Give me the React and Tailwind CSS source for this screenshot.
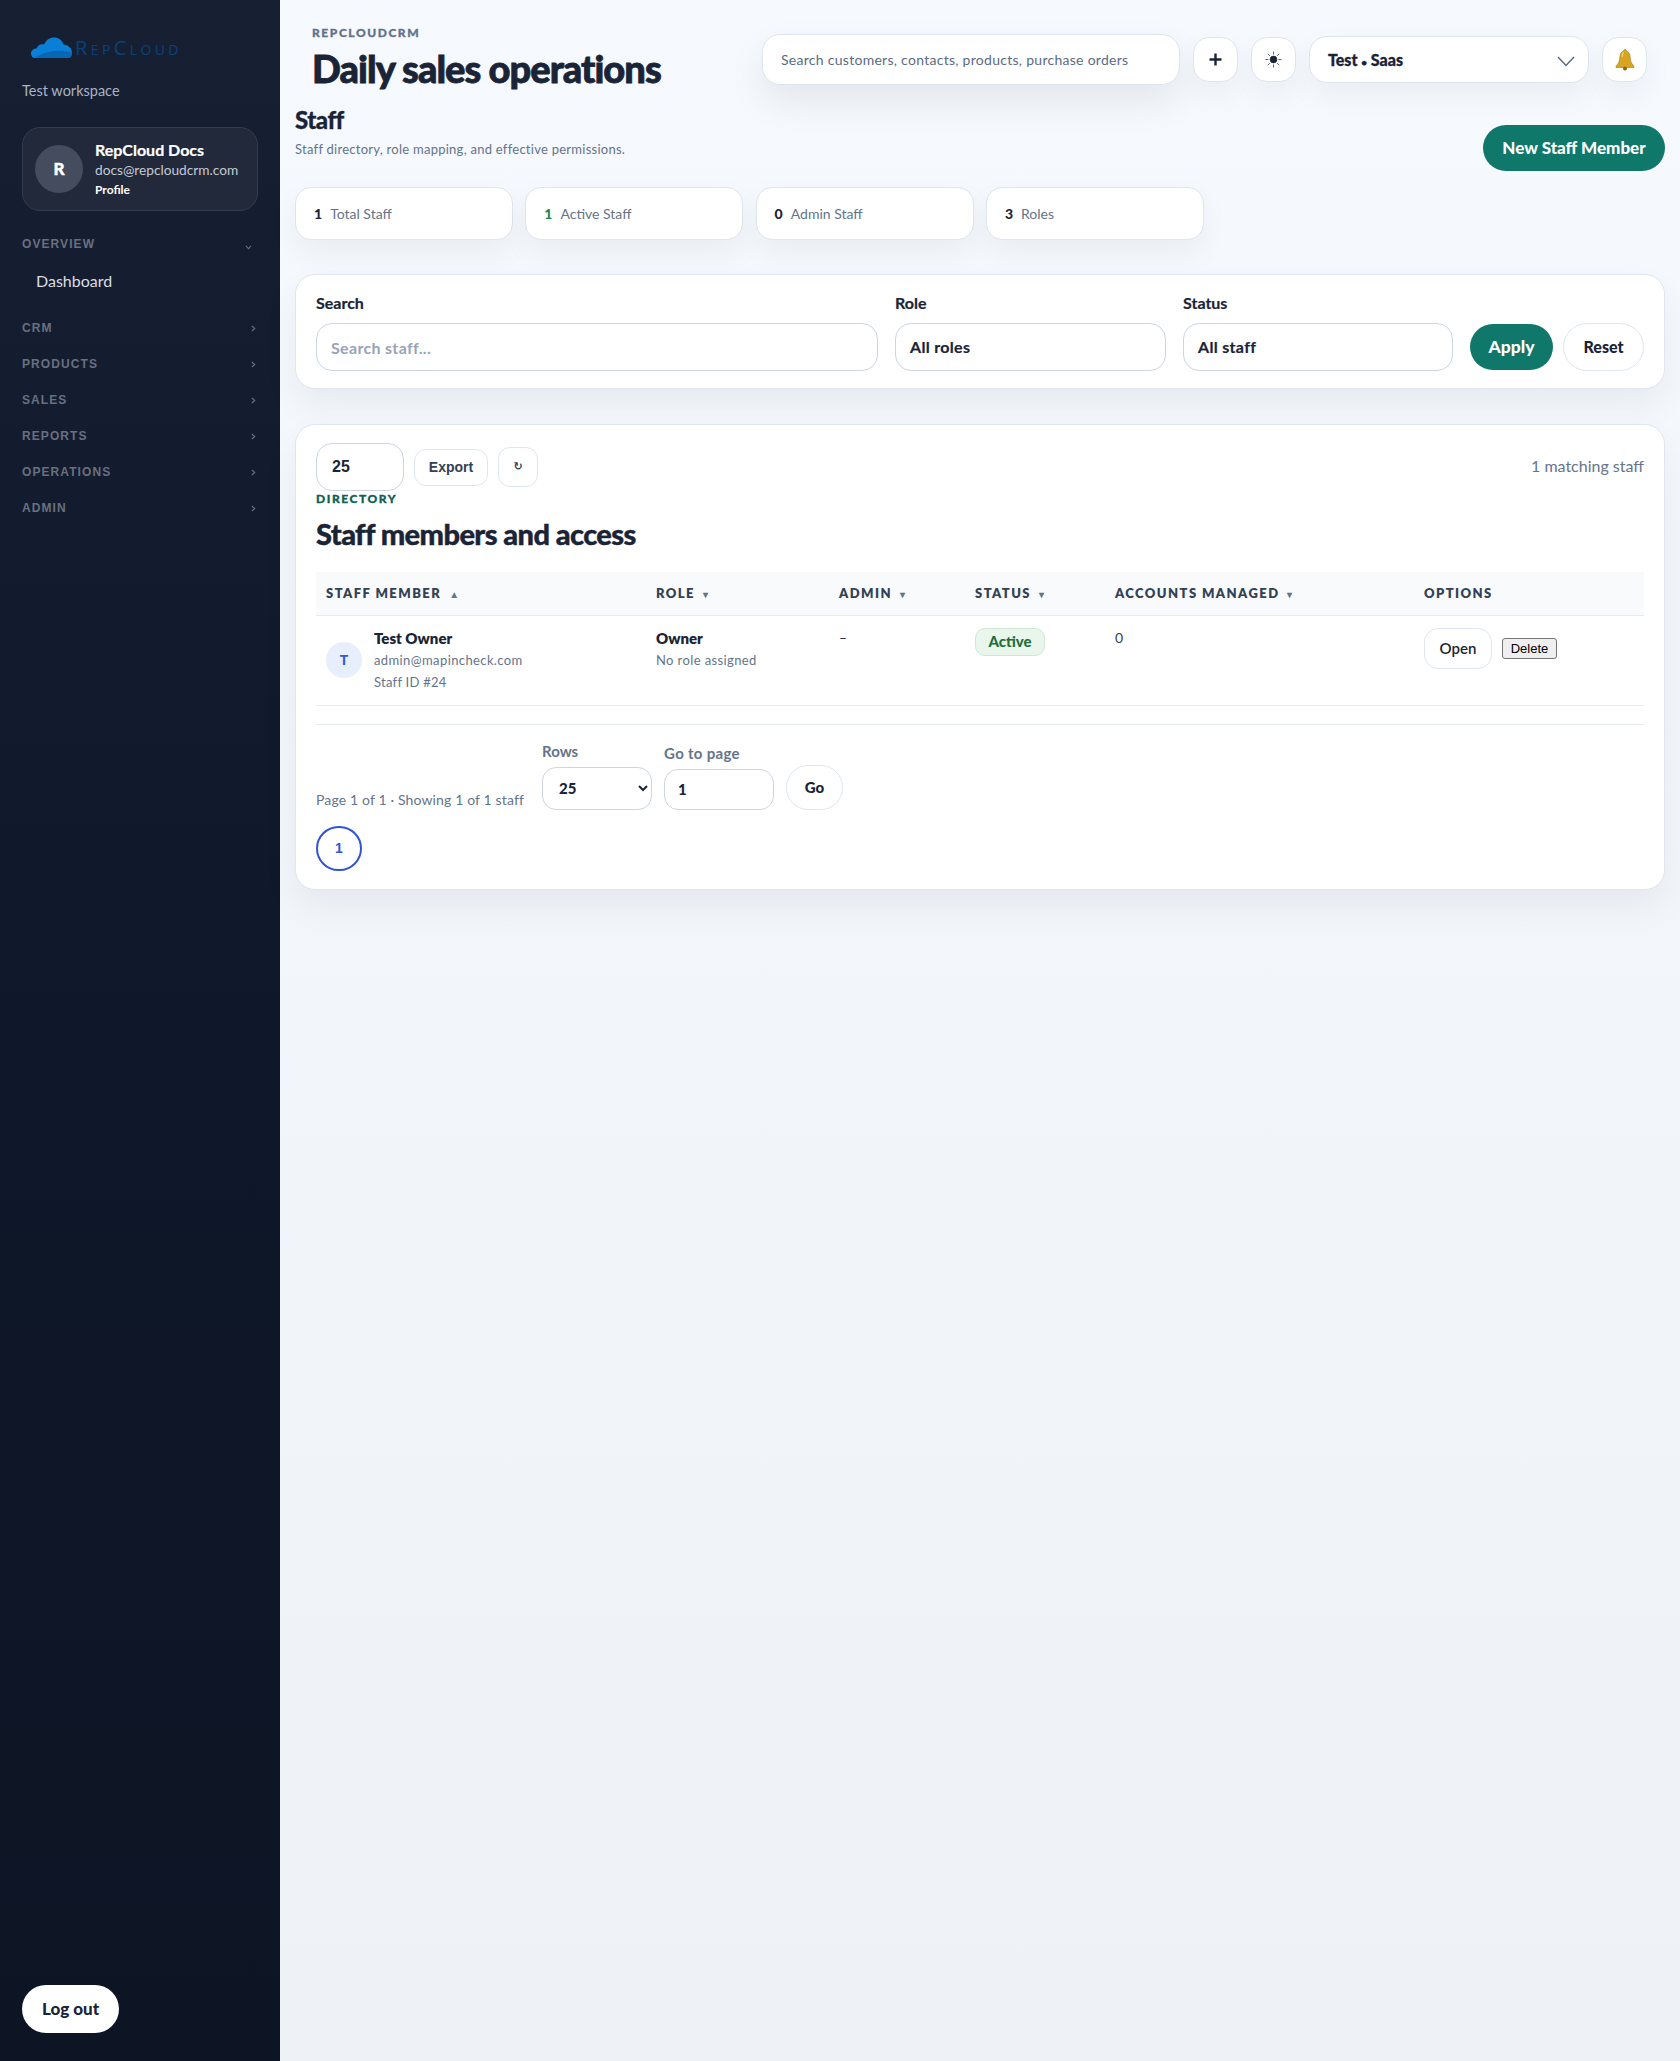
import React from "react";

const SECTIONS = ["CRM", "PRODUCTS", "SALES", "REPORTS", "OPERATIONS", "ADMIN"];
const STATS = [
  { value: "1", label: "Total Staff", color: "text-[#1a2436]" },
  { value: "1", label: "Active Staff", color: "text-[#1f8a4c]" },
  { value: "0", label: "Admin Staff", color: "text-[#1a2436]" },
  { value: "3", label: "Roles", color: "text-[#1a2436]" },
];

function Logo() {
  return (
    <div className="ml-[9px] flex h-[20px] items-end">
      <svg width="41" height="21" viewBox="0 0 41 21">
        <path d="M4 21C1.5 21 0 19 0 16.5 0 13.5 2.5 11.5 5.5 11.5 7 8 10 6.5 13 7.5 15 3 19 0.5 23 0.5 27.5 0.5 31 3 32.5 7.5 36.5 7.5 41 11 41 16 41 19 39 21 36.5 21Z" fill="#0a7fd8" />
        <path d="M4 21C12 15 26 11.500 41 15.500 41 19 39 21 36.500 21Z" fill="#0767b5" />
      </svg>
      <span className="ml-[3px] font-['Open_Sans',sans-serif] text-[20px] leading-[21px] tracking-[0.17em] text-[#0b4079] [font-variant:small-caps]">
        RepCloud
      </span>
    </div>
  );
}

function Sidebar() {
  return (
    <aside className="flex w-[280px] shrink-0 flex-col bg-gradient-to-b from-[#172033] via-[#0f182a] to-[#0d1424] px-[22px] pb-[28px] pt-[38px]">
      <Logo />
      <div className="mt-[23px] text-[14.500px] leading-[20px] text-[#aab3c2]">Test workspace</div>
      <div className="mt-[26px] flex h-[84px] items-center rounded-[18px] border border-[#353c4e] bg-[#22293b] pl-[12px]">
        <div className="flex h-[48px] w-[48px] items-center justify-center rounded-full bg-[#454c5e] text-[17px] font-black text-white [-webkit-text-stroke:0.4px_currentColor]">
          R
        </div>
        <div className="ml-[12px]">
          <div className="text-[16px] font-bold leading-[19px] text-white [-webkit-text-stroke:0.2px_currentColor]">RepCloud Docs</div>
          <div className="mt-[1px] text-[13.700px] leading-[20px] text-[#c3c9d3]">docs@repcloudcrm.com</div>
          <div className="mt-[1px] text-[12px] font-bold leading-[18px] text-white">Profile</div>
        </div>
      </div>
      <div className="mt-[23px] flex h-[20px] items-center justify-between">
        <span className="font-['Liberation_Sans',sans-serif] text-[12px] font-bold tracking-[0.09em] text-[#687080]">OVERVIEW</span>
        <svg className="mr-[6px] mt-[6px]" width="7" height="5" viewBox="0 0 8 6" fill="none" stroke="#687080" strokeWidth="1.300">
          <path d="M1 1l3 3.500L7 1" />
        </svg>
      </div>
      <div className="mt-[16px] h-[22px] pl-[14px] text-[16px] leading-[22px] text-[#d8dde5]">Dashboard</div>
      <div className="mt-[26px] flex flex-col gap-[16px]">
        {SECTIONS.map((name) => (
          <div key={name} className="flex h-[20px] items-center justify-between">
            <span className="font-['Liberation_Sans',sans-serif] text-[12px] font-bold tracking-[0.09em] text-[#687080]">{name}</span>
            <svg className="mr-[2px] mt-[1px]" width="5" height="7" viewBox="0 0 6 8" fill="none" stroke="#687080" strokeWidth="1.300">
              <path d="M1 1l3.500 3L1 7" />
            </svg>
          </div>
        ))}
      </div>
      <button className="mt-auto flex h-[48px] w-[97px] items-center justify-center rounded-full bg-white text-[17px] font-black text-[#1a2436]">
        Log out
      </button>
    </aside>
  );
}

function Topbar() {
  return (
    <div className="flex h-[104px] items-start justify-between pl-[17px] pr-[18px]">
      <div className="pt-[25px]">
        <div className="text-[12px] font-black leading-[16px] tracking-[0.13em] text-[#64728a] [-webkit-text-stroke:0.3px_currentColor]">REPCLOUDCRM</div>
        <h1 className="mt-[2px] text-[38px] font-black leading-[50px] tracking-[-0.025em] text-[#1a2436] [-webkit-text-stroke:0.8px_currentColor]">Daily sales operations</h1>
      </div>
      <div className="flex items-center pt-[34px]">
        <div className="flex h-[51px] w-[418px] items-center rounded-[18px] border border-[#dde5ef] bg-white px-[18px] text-[14px] tracking-[0.02em] text-[#5c6b82] shadow-[0_16px_36px_rgba(15,23,42,0.08)]">
          Search customers, contacts, products, purchase orders
        </div>
        <button className="ml-[13px] flex h-[45px] w-[45px] items-center justify-center rounded-[16px] border border-[#dde5ef] bg-white shadow-[0_12px_30px_rgba(15,23,42,0.05)]">
          <svg width="13" height="13" viewBox="0 0 13 13" stroke="#1a2436" strokeWidth="2.400">
            <path d="M6.500 0.500v12M0.500 6.500h12" />
          </svg>
        </button>
        <button className="ml-[13px] flex h-[45px] w-[45px] items-center justify-center rounded-[16px] border border-[#dde5ef] bg-white shadow-[0_12px_30px_rgba(15,23,42,0.05)]">
          <svg width="17" height="17" viewBox="0 0 17 17" stroke="#1a2436" strokeWidth="0.700">
            <circle cx="8.500" cy="8.500" r="3.400" fill="#1a2436" />
            <path d="M8.500 0.500v3M8.500 13.500v3M0.500 8.500h3M13.500 8.500h3M2.800 2.800l2.100 2.100M12.100 12.100l2.100 2.100M2.800 14.200l2.100-2.100M12.100 4.900l2.100-2.100" />
          </svg>
        </button>
        <div className="ml-[13px] flex h-[47px] w-[280px] items-center justify-between rounded-[18px] border border-[#dde5ef] bg-white pl-[18px] pr-[13px] shadow-[0_12px_30px_rgba(15,23,42,0.05)]">
          <span className="text-[16px] font-black text-[#1a2436] [-webkit-text-stroke:0.3px_currentColor]">
            Test <span className="text-[10px]">•</span> Saas
          </span>
          <svg className="mt-[3px]" width="18" height="11" viewBox="0 0 18 11" fill="none" stroke="#5c6b82" strokeWidth="1.500">
            <path d="M1 1l8 8.500L17 1" />
          </svg>
        </div>
        <button className="ml-[13px] flex h-[45px] w-[45px] items-center justify-center rounded-[16px] border border-[#dde5ef] bg-white shadow-[0_12px_30px_rgba(15,23,42,0.05)]">
          <svg width="20" height="22" viewBox="0 0 20 22">
            <path d="M10 0.500c1 0 1.400.6 1.400 1.500 2.600.8 3.600 3.300 3.800 6.500.2 4 1.300 6 3.800 8.500v1.500H1V17c2.500-2.500 3.600-4.500 3.800-8.500C5 5.300 6 2.800 8.600 2 8.600 1.100 9 .5 10 .5Z" fill="#d9a520" stroke="#8f6a10" strokeWidth="0.500" />
            <path d="M7 8c0-2 .6-3.500 1.800-4.200" stroke="#f5dc7d" strokeWidth="1.200" fill="none" />
            <circle cx="10" cy="19.500" r="2" fill="#8a6410" />
          </svg>
        </button>
      </div>
    </div>
  );
}

function Filters() {
  return (
    <section className="mt-[34px] flex h-[115px] items-start gap-[17px] rounded-[20px] border border-[#dfe6ef] bg-white px-[20px] pt-[17px] shadow-[0_16px_36px_rgba(15,23,42,0.06)]">
      <label className="min-w-0 flex-1">
        <div className="text-[16px] font-bold leading-[22px] text-[#1a2436] [-webkit-text-stroke:0.2px_currentColor]">Search</div>
        <input
          placeholder="Search staff..."
          className="mt-[9px] h-[48px] w-full rounded-[16px] border border-[#ccd5e2] bg-white px-[14px] text-[16px] font-bold tracking-[0.02em] outline-none placeholder:text-[#98a3b8]"
        />
      </label>
      <label className="w-[271px]">
        <div className="text-[16px] font-bold leading-[22px] text-[#1a2436] [-webkit-text-stroke:0.2px_currentColor]">Role</div>
        <div className="mt-[9px] flex h-[48px] items-center rounded-[16px] border border-[#ccd5e2] px-[14px] text-[16px] font-bold tracking-[0.02em] text-[#1a2436] [-webkit-text-stroke:0.2px_currentColor]">All roles</div>
      </label>
      <label className="w-[270px]">
        <div className="text-[16px] font-bold leading-[22px] text-[#1a2436] [-webkit-text-stroke:0.2px_currentColor]">Status</div>
        <div className="mt-[9px] flex h-[48px] items-center rounded-[16px] border border-[#ccd5e2] px-[14px] text-[16px] font-bold tracking-[0.02em] text-[#1a2436] [-webkit-text-stroke:0.2px_currentColor]">All staff</div>
      </label>
      <div className="flex gap-[10px] pt-[31px]">
        <button className="h-[46px] w-[83px] self-center rounded-[23px] bg-[#10776b] text-[17.500px] font-black text-white">Apply</button>
        <button className="h-[48px] w-[81px] rounded-[24px] border border-[#dfe6ef] bg-white text-[16px] font-black text-[#1a2436]">Reset</button>
      </div>
    </section>
  );
}

function HeaderCell({ label, arrow }) {
  return (
    <th className="px-[10px] text-left align-middle text-[13px] font-extrabold tracking-[0.11em] text-[#334155]">
      {label}
      {arrow && <span className="ml-[8px] font-['Liberation_Sans',sans-serif] text-[10px] text-[#64748b]">{arrow}</span>}
    </th>
  );
}

function StaffTable() {
  return (
    <table className="w-[1328px] table-fixed border-collapse">
      <colgroup>
        <col className="w-[330px]" />
        <col className="w-[183px]" />
        <col className="w-[136px]" />
        <col className="w-[140px]" />
        <col className="w-[309px]" />
        <col className="w-[230px]" />
      </colgroup>
      <thead>
        <tr className="h-[43px] border-b border-[#e6ebf2] bg-[#f8fafc]">
          <HeaderCell label="STAFF MEMBER" arrow="▲" />
          <HeaderCell label="ROLE" arrow="▾" />
          <HeaderCell label="ADMIN" arrow="▾" />
          <HeaderCell label="STATUS" arrow="▾" />
          <HeaderCell label="ACCOUNTS MANAGED" arrow="▾" />
          <HeaderCell label="OPTIONS" />
        </tr>
      </thead>
      <tbody>
        <tr className="border-b border-[#e6ebf2] align-top">
          <td className="px-[10px] pb-[12px] pt-[11px]">
            <div className="flex items-center gap-[12px]">
              <div className="flex h-[36px] w-[36px] items-center justify-center rounded-full bg-[#e7eefc] text-[14px] font-black text-[#2f5fd0]">T</div>
              <div className="leading-[22px]">
                <div className="text-[15px] font-extrabold text-[#1a2436]">Test Owner</div>
                <div className="text-[13px] tracking-[0.03em] text-[#64748b]">admin@mapincheck.com</div>
                <div className="text-[13px] tracking-[0.02em] text-[#64748b]">Staff ID #24</div>
              </div>
            </div>
          </td>
          <td className="px-[10px] pt-[11px] leading-[22px]">
            <div className="text-[15px] font-extrabold text-[#1a2436]">Owner</div>
            <div className="text-[13px] tracking-[0.03em] text-[#64748b]">No role assigned</div>
          </td>
          <td className="px-[10px] pt-[11px] text-[14px] leading-[22px] text-[#1a2436]">–</td>
          <td className="px-[10px] pt-[12px]">
            <span className="flex h-[28px] w-[70px] items-center justify-center rounded-[10px] border border-[#cfe8d5] bg-[#e8f6ec] text-[15px] font-black text-[#1f6f3a]">Active</span>
          </td>
          <td className="px-[10px] pt-[11px] text-[14px] leading-[22px] text-[#334155]">0</td>
          <td className="px-[10px] pt-[12px]">
            <div className="flex items-center gap-[10px]">
              <button className="h-[41px] w-[68px] rounded-[14px] border border-[#dfe6ef] bg-white text-[15px] font-semibold text-[#1a2436]">Open</button>
              <button className="h-[21px] w-[55px] rounded-[3px] border border-[#767676] bg-[#efefef] font-['Liberation_Sans',sans-serif] text-[13px] text-black">Delete</button>
            </div>
          </td>
        </tr>
      </tbody>
    </table>
  );
}

function Directory() {
  return (
    <section className="mt-[35px] h-[466px] rounded-[20px] border border-[#dfe6ef] bg-white px-[20px] pt-[18px] shadow-[0_16px_36px_rgba(15,23,42,0.06)]">
      <div className="flex items-center justify-between">
        <div className="flex items-center">
          <div className="flex h-[48px] w-[88px] items-center rounded-[16px] border border-[#ccd5e2] px-[15px] font-['Liberation_Sans',sans-serif] text-[16px] font-bold text-[#1a2436]">25</div>
          <button className="ml-[10px] h-[37px] w-[74px] rounded-[12px] border border-[#dfe6ef] bg-white font-['Liberation_Sans',sans-serif] text-[14px] font-bold text-[#334155]">Export</button>
          <button className="ml-[10px] h-[40px] w-[40px] rounded-[12px] border border-[#dfe6ef] bg-white font-['DejaVu_Sans',sans-serif] text-[11px] font-bold text-[#334155]">↻</button>
        </div>
        <span className="mb-[2px] text-[16px] text-[#64748b]">1 matching staff</span>
      </div>
      <div className="text-[12px] font-black leading-[15px] tracking-[0.13em] text-[#0f5f54] [-webkit-text-stroke:0.3px_currentColor]">DIRECTORY</div>
      <h2 className="mb-[20px] mt-[10px] text-[29px] font-black leading-[36px] tracking-[-0.02em] text-[#1a2436] [-webkit-text-stroke:0.4px_currentColor]">Staff members and access</h2>
      <StaffTable />
      <div className="mt-[18px] flex items-end border-t border-[#e6ebf2] pt-[17px]">
        <span className="text-[14px] leading-[20px] tracking-[0.01em] text-[#64748b]">Page 1 of 1 · Showing 1 of 1 staff</span>
        <label className="ml-[18px]">
          <div className="text-[15px] font-bold leading-[18px] text-[#64748b]">Rows</div>
          <select defaultValue="25" className="mt-[7px] h-[43px] w-[110px] rounded-[14px] border border-[#ccd5e2] bg-white px-[12px] text-[15px] font-black text-[#1a2436]">
            <option>25</option>
          </select>
        </label>
        <label className="ml-[12px]">
          <div className="text-[15px] font-bold leading-[18px] tracking-[0.02em] text-[#64748b]">Go to page</div>
          <input defaultValue="1" className="mt-[7px] h-[41px] w-[110px] rounded-[14px] border border-[#ccd5e2] bg-white px-[13px] text-[15px] font-black text-[#1a2436] outline-none" />
        </label>
        <button className="ml-[12px] h-[45px] w-[57px] rounded-[22px] border border-[#dfe6ef] bg-white text-[15px] font-black text-[#1a2436]">Go</button>
      </div>
      <button className="mt-[16px] h-[45px] w-[46px] rounded-full border-2 border-[#2f55d4] bg-white font-['Liberation_Sans',sans-serif] text-[14px] font-bold text-[#2f55d4]">1</button>
    </section>
  );
}

export default function App() {
  return (
    <div className="flex min-h-screen font-['Lato','Noto_Sans',sans-serif]">
      <Sidebar />
      <main className="min-w-0 flex-1 bg-gradient-to-b from-[#f6f9fd] to-[#eef2f7] px-[15px]">
        <Topbar />
        <div className="flex h-[67px] items-end justify-between">
          <div className="self-start">
            <div className="text-[24px] font-black leading-[32px] tracking-[-0.02em] text-[#1a2436] [-webkit-text-stroke:0.3px_currentColor]">Staff</div>
            <div className="mt-[4px] text-[13px] leading-[18px] tracking-[0.02em] text-[#64748b]">Staff directory, role mapping, and effective permissions.</div>
          </div>
          <button className="h-[46px] w-[182px] rounded-[23px] bg-[#10776b] text-[17px] font-black text-white">New Staff Member</button>
        </div>
        <div className="mt-[16px] flex gap-[12.300px]">
          {STATS.map((s) => (
            <div key={s.label} className="flex h-[53px] w-[218px] items-center rounded-[16px] border border-[#dde5ef] bg-white px-[18px] text-[14px] shadow-[0_12px_30px_rgba(15,23,42,0.05)]">
              <span className={`font-black ${s.color}`}>{s.value}</span>
              <span className="ml-[8px] text-[#64748b]">{s.label}</span>
            </div>
          ))}
        </div>
        <Filters />
        <Directory />
      </main>
    </div>
  );
}
